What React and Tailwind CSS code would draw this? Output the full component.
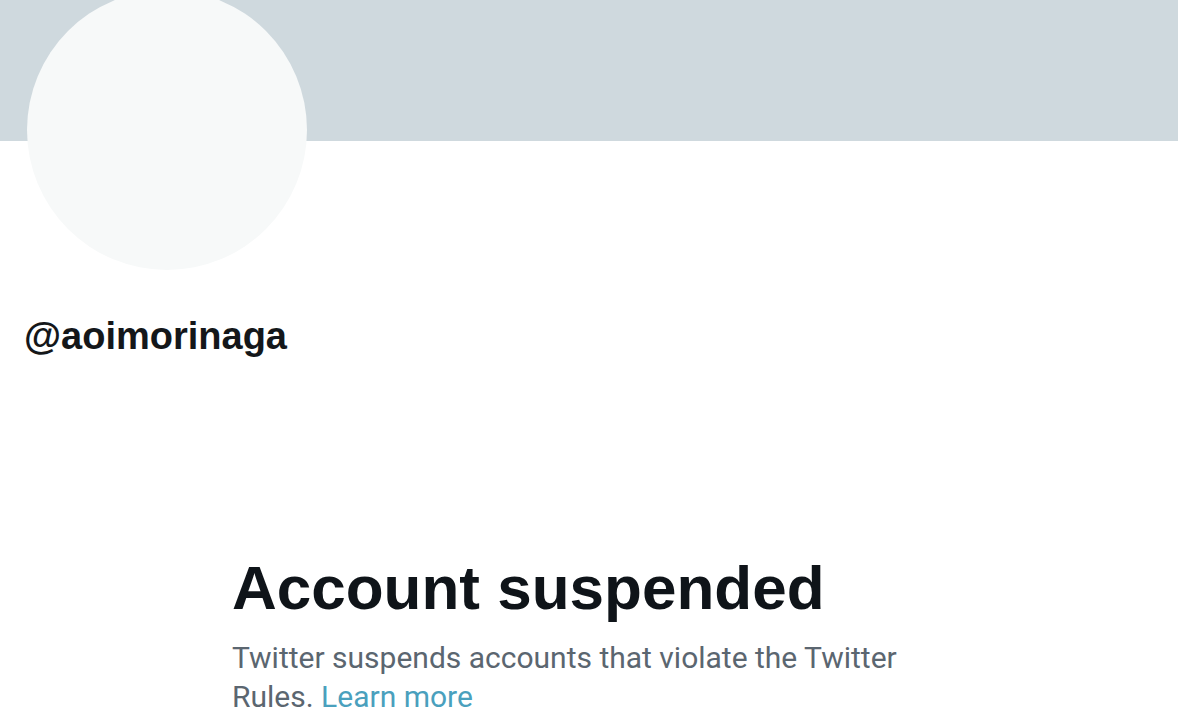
export default function App() {
  return (
    <div className="w-[1178px] h-[724px] overflow-hidden bg-white relative">
      <div className="h-[141px] bg-[#cfd9de]" />
      <div className="ml-[27px] mt-[-151px] w-[280px] h-[280px] rounded-full bg-[#f7f9f9] relative" />
      <div
        className="ml-[24px] mt-[44px] text-[38px] leading-[44px] font-bold text-[#14171a]"
        style={{ fontFamily: '"Liberation Sans", Arial, sans-serif' }}
      >
        @aoimorinaga
      </div>
      <div className="ml-[232px] mt-[196px] w-[720px]">
        <h1
          className="text-[62px] leading-[68px] font-bold text-[#0f1419]"
          style={{ fontFamily: '"Liberation Sans", Arial, sans-serif' }}
        >
          Account suspended
        </h1>
        <p
          className="mt-[16px] text-[30px] leading-[39px] text-[#5b6670] w-[690px]"
          style={{ fontFamily: 'Roboto, "Liberation Sans", sans-serif' }}
        >
          Twitter suspends accounts that violate the Twitter Rules.{" "}
          <a className="text-[#4aa0bd]">Learn more</a>
        </p>
      </div>
    </div>
  );
}
